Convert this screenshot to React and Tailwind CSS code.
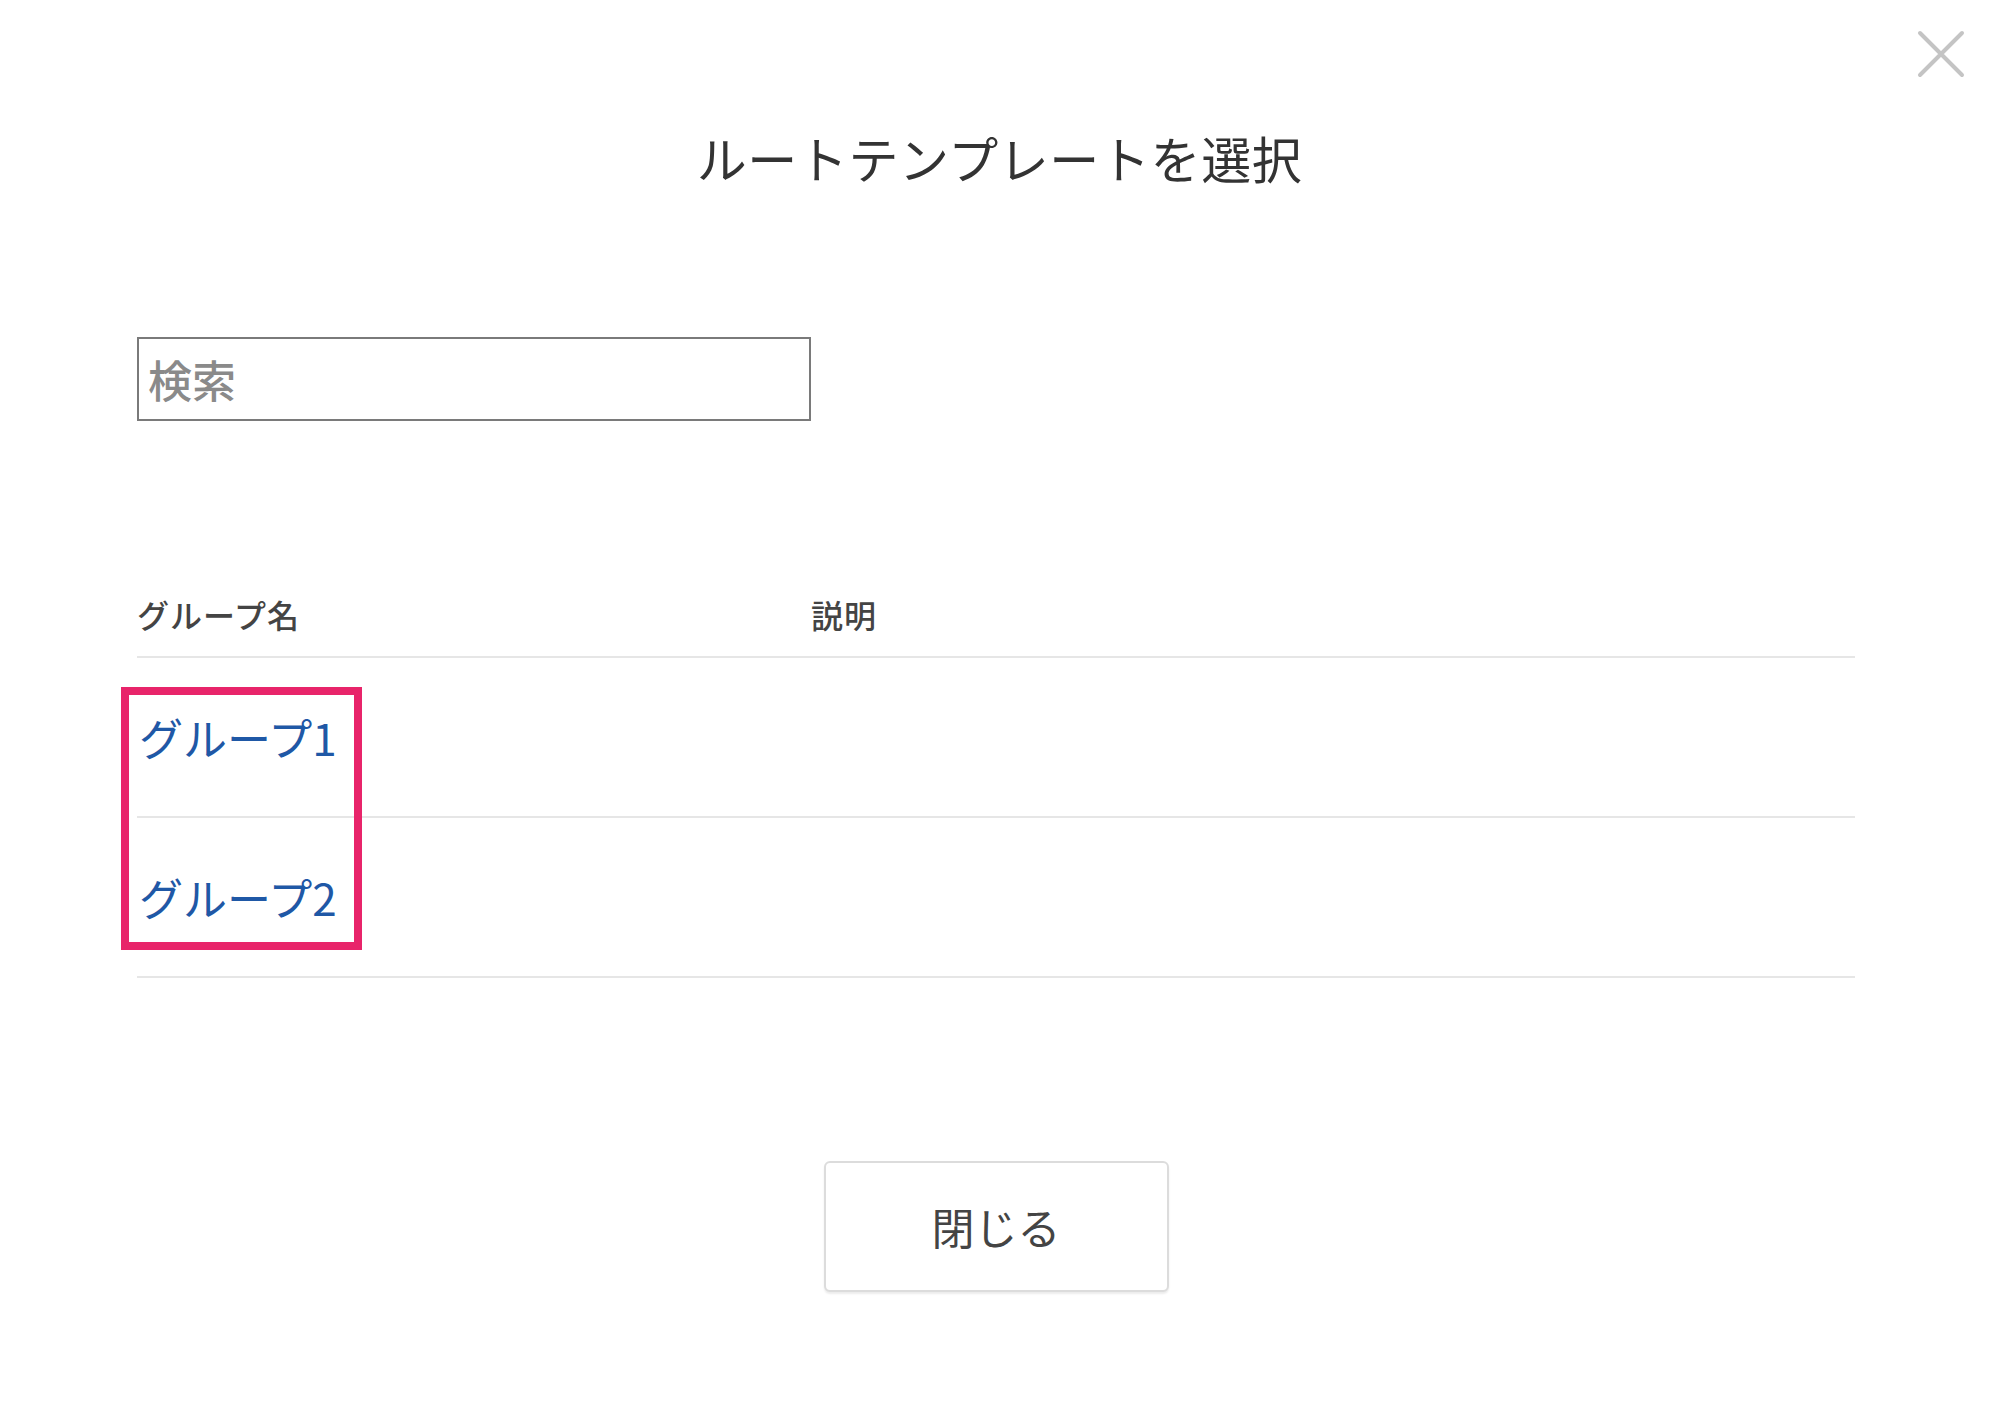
const font = { fontFamily: '"Noto Sans CJK JP", "Noto Sans", sans-serif' };

const groups = [
  { name: 'グループ1', description: '' },
  { name: 'グループ2', description: '' },
];

export default function App() {
  return (
    <div className="relative h-[1415px] w-[1999px] bg-white" style={font}>
      <button className="absolute left-[1914px] top-[27px] h-[54px] w-[54px]" aria-label="close">
        <svg viewBox="0 0 54 54" className="h-full w-full">
          <path d="M6 6 L48 48 M48 6 L6 48" stroke="#c4c4c4" strokeWidth="4" strokeLinecap="round" />
        </svg>
      </button>

      <h1 className="pt-[132px] text-center text-[50px] font-normal leading-none tracking-[0.6px] text-[#333]">
        ルートテンプレートを選択
      </h1>

      <div className="ml-[137px] w-[1718px]">
        <input
          className="mt-[155px] h-[84px] w-[674px] border-2 border-[#7a7a7a] pl-[9px] text-[44px] font-medium leading-none text-[#333] outline-none placeholder:text-[#8a8a8a]"
          placeholder="検索"
        />

        <div className="mt-[177px] grid grid-cols-[674px_1fr] border-b-2 border-[#e6e6e6] pb-[26px] text-[32px] font-medium leading-none tracking-[1px] text-[#444]">
          <div>グループ名</div>
          <div>説明</div>
        </div>

        {groups.map((g) => (
          <div key={g.name} className="grid grid-cols-[674px_1fr] border-b-2 border-[#e6e6e6] pb-[57px] pt-[57px] text-[44px] leading-none">
            <a href="#" className="pl-[2px] text-[#1f58a6]">{g.name}</a>
            <div className="text-[#444]">{g.description}</div>
          </div>
        ))}

        <div className="mt-[183px] flex justify-center">
          <button className="h-[131px] w-[345px] rounded-md border-2 border-[#dcdcdc] bg-white text-[43px] leading-none text-[#444] shadow-[0_2px_2px_rgba(0,0,0,0.08)]">
            閉じる
          </button>
        </div>
      </div>

      <div className="pointer-events-none absolute left-[121px] top-[687px] h-[263px] w-[241px] border-[8px] border-[#e8246a]" />
    </div>
  );
}
